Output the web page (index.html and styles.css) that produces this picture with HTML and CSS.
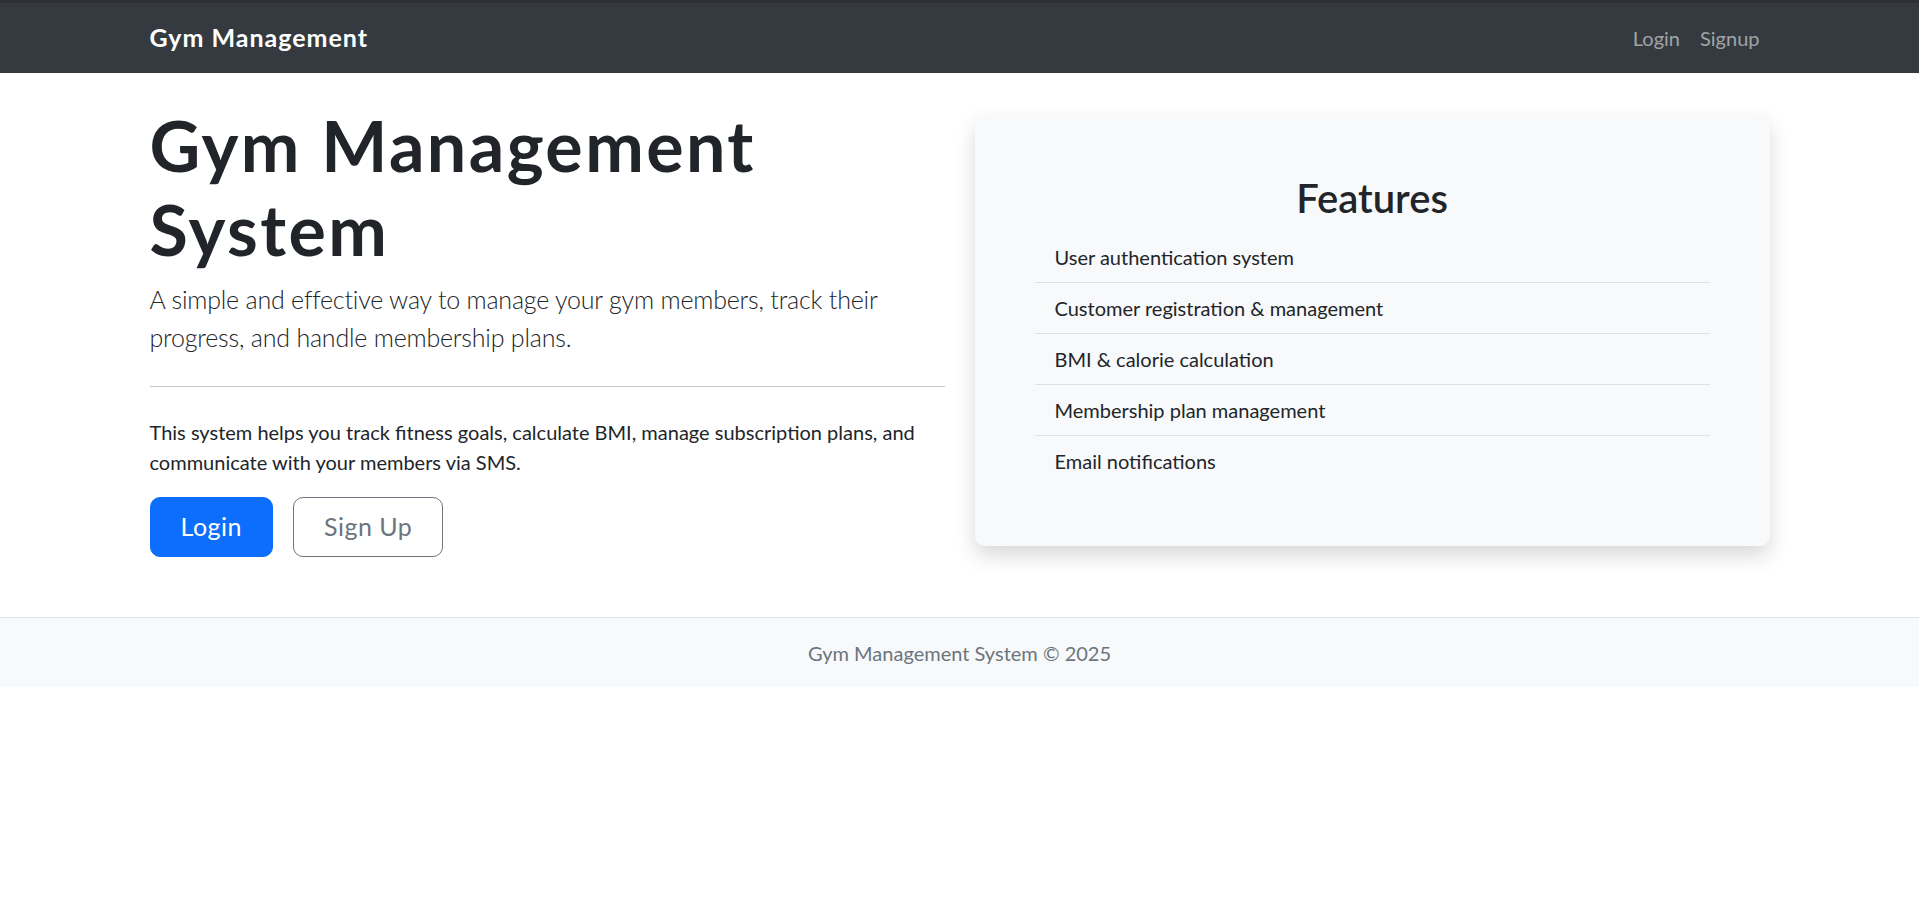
FILE: index.html
```html
<!DOCTYPE html>
<html lang="en">
<head>
<meta charset="utf-8">
<title>Gym Management System</title>
<link rel="stylesheet" href="styles.css">
</head>
<body>
<div class="topstrip"></div>
<nav class="navbar">
  <div class="container nav-inner">
    <a class="brand" href="#">Gym Management</a>
    <ul class="nav">
      <li><a class="nav-link" href="#">Login</a></li>
      <li><a class="nav-link" href="#">Signup</a></li>
    </ul>
  </div>
</nav>
<main class="container main">
  <div class="row">
    <div class="col">
      <h1 class="display">Gym Management System</h1>
      <p class="lead">A simple and effective way to manage your gym members, track their progress, and handle membership plans.</p>
      <hr class="divider">
      <p class="text">This system helps you track fitness goals, calculate BMI, manage subscription plans, and communicate with your members via SMS.</p>
      <div class="actions">
        <a class="btn btn-primary" href="#">Login</a>
        <a class="btn btn-outline" href="#">Sign Up</a>
      </div>
    </div>
    <div class="col">
      <div class="card">
        <h2 class="card-title">Features</h2>
        <ul class="list">
          <li class="list-item">User authentication system</li>
          <li class="list-item">Customer registration &amp; management</li>
          <li class="list-item">BMI &amp; calorie calculation</li>
          <li class="list-item">Membership plan management</li>
          <li class="list-item">Email notifications</li>
        </ul>
      </div>
    </div>
  </div>
</main>
<footer class="footer">Gym Management System © 2025</footer>
</body>
</html>
```

FILE: styles.css
```css
* { box-sizing: border-box; }

html, body {
  margin: 0;
  padding: 0;
}

body {
  font-family: "Lato", "Open Sans", sans-serif;
  font-size: 20px;
  line-height: 30px;
  color: #212529;
  background: #fff;
}

a { text-decoration: none; }

.topstrip {
  height: 3px;
  background: #2e3033;
}

.container {
  width: 1650px;
  max-width: 100%;
  margin: 0 auto;
  padding: 0 15px;
}

/* navbar */
.navbar {
  background: #343a40;
  padding: 10px 0;
  height: 70px;
}

.nav-inner {
  display: flex;
  align-items: center;
  justify-content: space-between;
}

.brand {
  color: #fff;
  font-size: 25px;
  line-height: 37.5px;
  font-weight: 700;
  letter-spacing: 1px;
  padding: 6.25px 0;
}

.nav {
  display: flex;
  list-style: none;
  margin: 0;
  padding: 0;
}

.nav-link {
  display: block;
  padding: 10px 10px;
  font-size: 20px;
  line-height: 30px;
  color: rgba(255, 255, 255, 0.55);
}

/* main */
.main {
  padding-top: 30px;
  padding-bottom: 60px;
}

.row {
  display: flex;
  align-items: center;
  gap: 30px;
}

.col {
  flex: 1 1 0;
  min-width: 0;
}

.display {
  font-size: 70px;
  line-height: 84px;
  font-weight: 700;
  letter-spacing: 2.4px;
  margin: 0 0 10px;
}

.lead {
  font-size: 25px;
  line-height: 37.5px;
  font-weight: 300;
  letter-spacing: -0.2px;
  margin: 0 0 20px;
}

.divider {
  border: 0;
  border-top: 1px solid #c8c9ca;
  margin: 30px 0;
  height: 0;
}

.text {
  margin: 0 0 20px;
}

.actions {
  display: flex;
  gap: 20px;
}

.btn {
  display: inline-block;
  font-size: 25px;
  line-height: 37.5px;
  letter-spacing: 0.5px;
  padding: 10px 30px;
  border: 1px solid transparent;
  border-radius: 10px;
}

.btn-primary {
  background: #0d6efd;
  border-color: #0d6efd;
  color: #fff;
}

.btn-outline {
  background: #fff;
  border-color: #6c757d;
  color: #6c757d;
}

/* card */
.card {
  background: #f8f9fa;
  border-radius: 10px;
  padding: 60px;
  box-shadow: 0 10px 20px rgba(0, 0, 0, 0.15);
}

.card-title {
  font-size: 40px;
  line-height: 48px;
  font-weight: 600;
  text-align: center;
  margin: 0 0 10px;
}

.list {
  list-style: none;
  margin: 0;
  padding: 0;
}

.list-item {
  padding: 10px 20px;
  border-bottom: 1px solid #dee2e6;
}

.list-item:last-child {
  border-bottom: 0;
}

/* footer */
.footer {
  background: #f8f9fa;
  border-top: 1px solid #dee2e6;
  padding: 20px 0 19px;
  text-align: center;
  color: #6c757d;
}
```
